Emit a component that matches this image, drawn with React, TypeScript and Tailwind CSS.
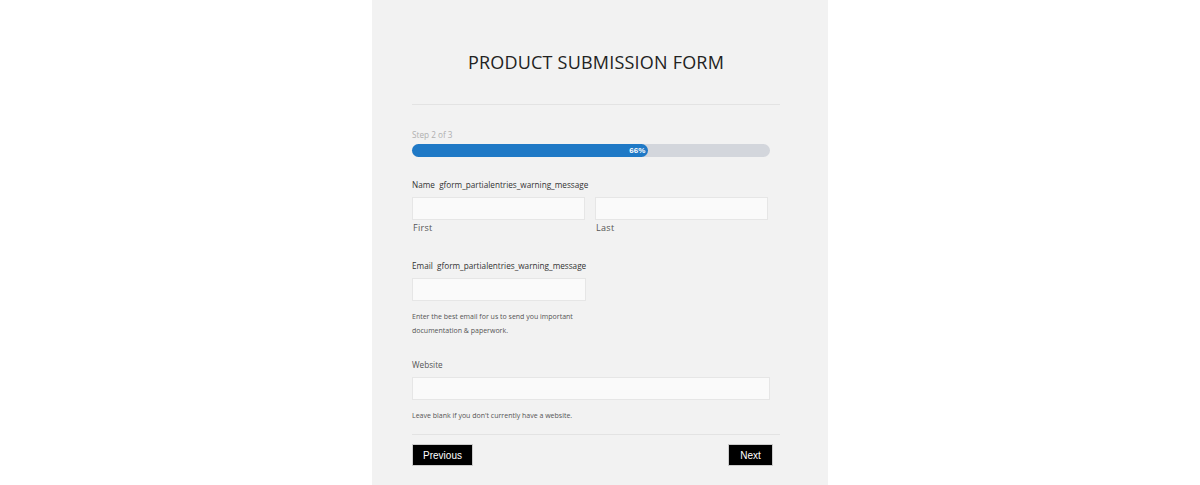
import React from 'react';

const SANS = { fontFamily: '"Open Sans", "Liberation Sans", sans-serif' };
const ARIAL = { fontFamily: '"Liberation Sans", Arial, sans-serif' };

function Field({ label, note, children }: { label: React.ReactNode; note?: React.ReactNode; children: React.ReactNode }) {
  return (
    <div>
      <div className="text-[8.2px] leading-[12px] text-[#333]">{label}</div>
      {children}
      {note}
    </div>
  );
}

const inputCls = 'block h-[23px] bg-[#fafafa] border border-[#e6e6e6] outline-none';

export default function App() {
  return (
    <div className="w-[1200px] h-[485px] bg-white flex justify-center overflow-hidden" style={SANS}>
      <div className="w-[456px] h-[520px] bg-[#f2f2f2] pl-[40px] pr-[48px]">
        {/* Title */}
        <h1 className="pt-[50px] text-center text-[18px] leading-[24px] text-[#222] tracking-[0.2px]">
          PRODUCT SUBMISSION FORM
        </h1>
        <div className="mt-[30px] border-t border-[#e3e3e3]" />

        {/* Progress */}
        <div className="mt-[24px] text-[8.2px] leading-[12px] text-[#b0b0b0]">Step 2 of 3</div>
        <div className="mt-[3px] w-[358px] h-[13px] rounded-full bg-[#d3d6dc] flex">
          <div className="w-[66%] h-full rounded-full bg-[#1f79c6] flex items-center justify-end pr-[3px]">
            <span className="text-[8px] font-bold text-white" style={ARIAL}>66%</span>
          </div>
        </div>

        {/* Name */}
        <div className="mt-[22px]">
          <Field label={<>Name&nbsp;&nbsp;gform_partialentries_warning_message</>}>
            <div className="mt-[6px] flex gap-[10px]">
              <div>
                <input className={`${inputCls} w-[173px]`} />
                <div className="mt-[2px] pl-[1px] text-[9px] leading-[12px] text-[#555] tracking-[0.3px]">First</div>
              </div>
              <div>
                <input className={`${inputCls} w-[173px]`} />
                <div className="mt-[2px] pl-[1px] text-[9px] leading-[12px] text-[#555] tracking-[0.3px]">Last</div>
              </div>
            </div>
          </Field>
        </div>

        {/* Email */}
        <div className="mt-[26px]">
          <Field
            label={<>Email&nbsp;&nbsp;gform_partialentries_warning_message</>}
            note={
              <div className="mt-[9px] text-[7px] leading-[14px] text-[#555]">
                Enter the best email for us to send you important
                <br />
                documentation &amp; paperwork.
              </div>
            }
          >
            <input className={`${inputCls} mt-[6px] w-[174px]`} />
          </Field>
        </div>

        {/* Website */}
        <div className="mt-[21px]">
          <Field
            label={<span className="text-[#555]">Website</span>}
            note={
              <div className="mt-[9px] text-[7px] leading-[14px] text-[#555]">
                Leave blank if you don&apos;t currently have a website.
              </div>
            }
          >
            <input className={`${inputCls} mt-[6px] w-[358px]`} />
          </Field>
        </div>

        {/* Footer */}
        <div className="mt-[11px] border-t border-[#e3e3e3] pt-[9px] flex justify-between pr-[7px]">
          <button className="h-[22px] w-[61px] bg-black text-white text-[10px] border border-[#ccc]" style={ARIAL}>
            Previous
          </button>
          <button className="h-[22px] w-[45px] bg-black text-white text-[10px] border border-[#ccc]" style={ARIAL}>
            Next
          </button>
        </div>
      </div>
    </div>
  );
}
